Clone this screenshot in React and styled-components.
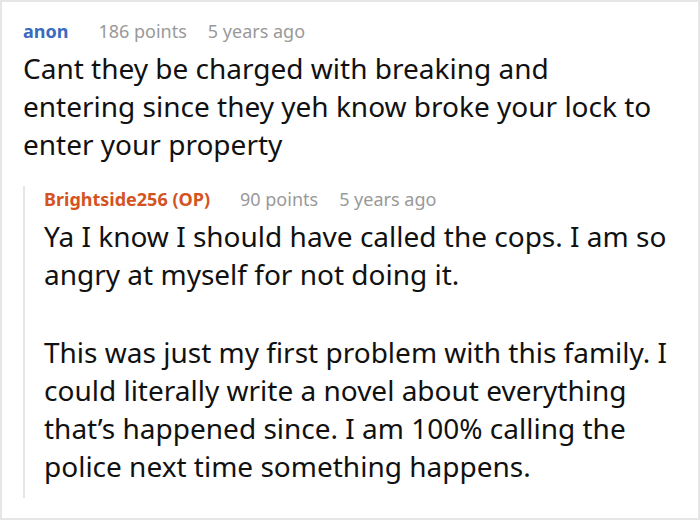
import styled, { createGlobalStyle } from 'styled-components';

const GlobalStyle = createGlobalStyle`
  html, body {
    margin: 0;
    padding: 0;
    background: #fff;
  }
  body {
    font-family: "Noto Sans", "Open Sans", sans-serif;
  }
`;

export default function App() {
  return (
    <>
      <GlobalStyle />
      <Frame>
        <Comment>
          <Meta>
            <Author color="#3a6bbf">anon</Author>
            <Info>186 points</Info>
            <Info>5 years ago</Info>
          </Meta>
          <Body $maxWidth="632px">
            <p>
              Cant they be charged with breaking and entering since they yeh know broke your lock to
              enter your property
            </p>
          </Body>
          <Reply>
            <Meta>
              <Author color="#d4531f">Brightside256 (OP)</Author>
              <Info>90 points</Info>
              <Info>5 years ago</Info>
            </Meta>
            <Body>
              <p>Ya I know I should have called the cops. I am so angry at myself for not doing it.</p>
              <p>
                This was just my first problem with this family. I could literally write a novel about
                everything that’s happened since. I am 100% calling the police next time something
                happens.
              </p>
            </Body>
          </Reply>
        </Comment>
      </Frame>
    </>
  );
}

const Frame = styled.div`
  box-sizing: border-box;
  width: 700px;
  height: 520px;
  border: 2px solid #e6e6e6;
  overflow: hidden;
  padding: 16px 4px 0 21px;
`;

const Comment = styled.div`
  display: flex;
  flex-direction: column;
`;

const Meta = styled.div`
  display: flex;
  align-items: baseline;
  gap: 21px;
  font-size: 18px;
  line-height: 26px;
`;

const Author = styled.span`
  color: ${(p) => p.color};
  font-weight: 700;
  margin-right: 9px;
`;

const Info = styled.span`
  color: #999;
`;

const Body = styled.div`
  color: #111;
  font-size: 28px;
  line-height: 38px;
  margin-top: 5px;
  max-width: ${(p) => p.$maxWidth || 'none'};

  p {
    margin: 0;
  }
  p + p {
    margin-top: 40px;
  }
`;

const Reply = styled.div`
  margin-top: 23px;
  border-left: 2px solid #e6e6e6;
  padding-left: 19px;
  padding-bottom: 13px;
`;
